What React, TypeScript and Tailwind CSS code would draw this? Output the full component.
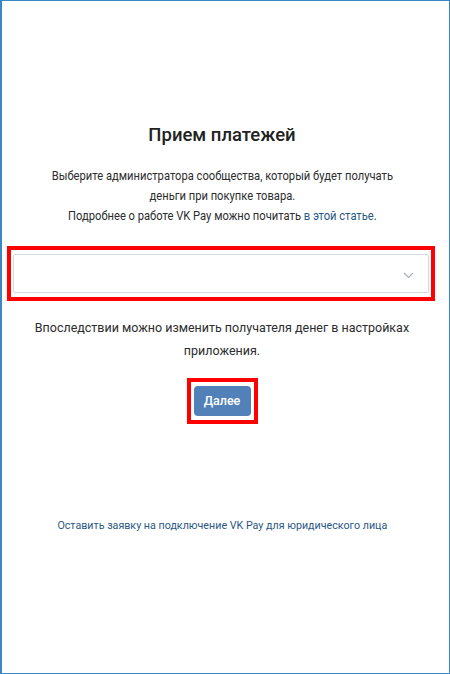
import React from 'react';

export default function App() {
  return (
    <div className="w-[450px] h-[674px] bg-white border border-l-2 border-[#3a87c8] flex flex-col items-center pr-[7px] font-['Roboto',sans-serif] text-[#222]">
      <h1 className="mt-[120px] text-[18.5px] leading-[28px] font-medium text-[#222]">Прием платежей</h1>

      <p className="mt-[17px] text-[13px] leading-[20px] text-center text-[#2c2d2e] whitespace-nowrap scale-x-[0.86]">
        Выберите администратора сообщества, который будет получать
        <br />
        деньги при покупке товара.
        <br />
        Подробнее о работе VK Pay можно почитать{' '}
        <a className="text-[#2a5885]">в этой статье</a>.
      </p>

      <div className="mt-[20px] self-start ml-[5px] w-[428px] border-4 border-[#ff0000] px-[2px] py-[4px]">
        <div className="h-[39px] border border-[#d3d9de] rounded-[2px] flex items-center justify-end pr-[14px] pt-[3px]">
          <svg width="11" height="7" viewBox="0 0 11 7" fill="none" stroke="#a8aeb5" strokeWidth="1.2">
            <path d="M1 1 L5.5 5.5 L10 1" />
          </svg>
        </div>
      </div>

      <p className="mt-[15px] text-[13px] leading-[23px] text-center text-[#2c2d2e] whitespace-nowrap scale-x-[0.96]">
        Впоследствии можно изменить получателя денег в настройках
        <br />
        приложения.
      </p>

      <div className="mt-[16px] border-4 border-[#ff0000] px-[3px] py-[4px]">
        <button className="block w-[57px] h-[30px] bg-[#5181b8] rounded-[4px] text-white text-[12.5px] font-medium">
          Далее
        </button>
      </div>

      <a className="mt-[93px] text-[11.5px] text-[#2a5885] whitespace-nowrap scale-x-[0.93]">
        Оставить заявку на подключение VK Pay для юридического лица
      </a>
    </div>
  );
}
